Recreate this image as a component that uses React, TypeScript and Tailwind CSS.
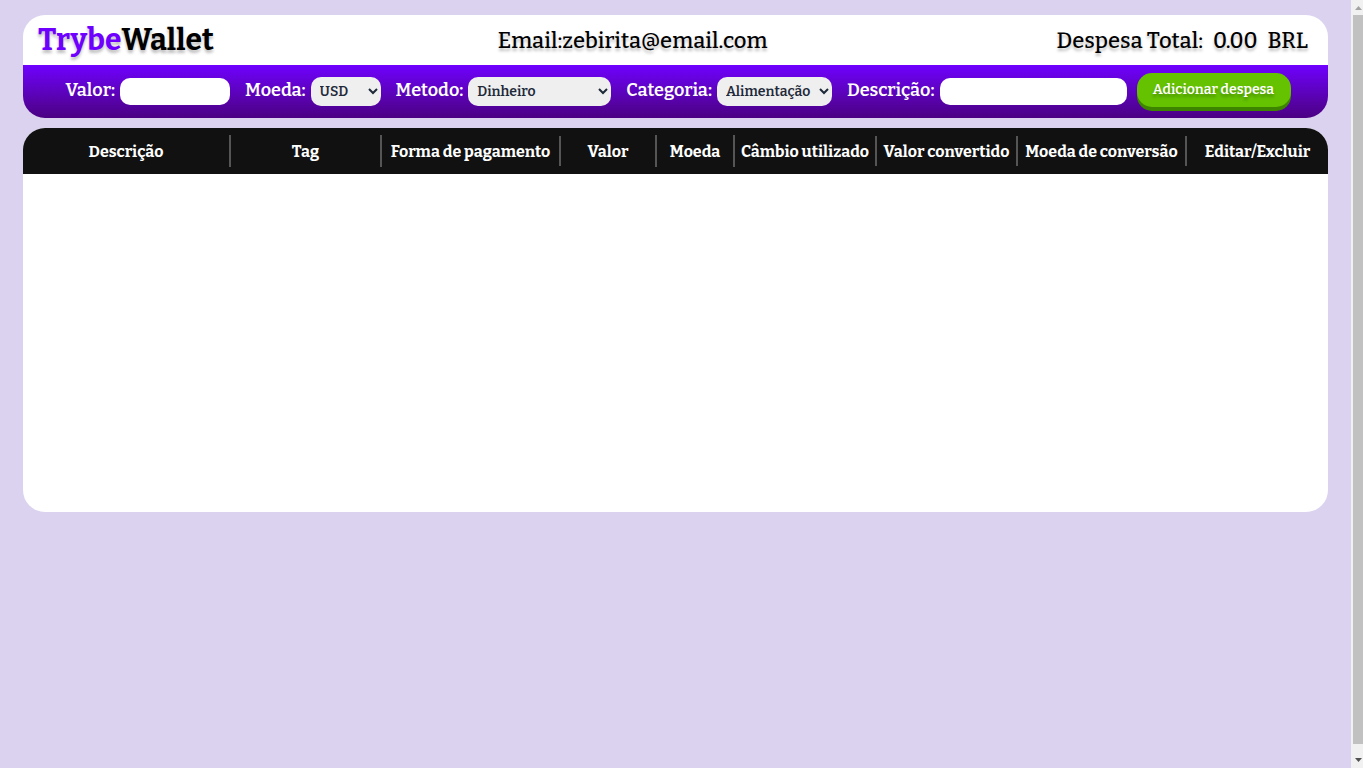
import { useState } from 'react';
import type { ReactNode } from 'react';

const columns = [
  { name: 'Descrição', width: 'w-[208px]', rule: 'h-8' },
  { name: 'Tag', width: 'w-[151px]', rule: 'h-8' },
  { name: 'Forma de pagamento', width: 'w-[179px]', rule: 'h-[30px]' },
  { name: 'Valor', width: 'w-[96px]', rule: 'h-8' },
  { name: 'Moeda', width: 'w-[78px]', rule: 'h-8' },
  { name: 'Câmbio utilizado', width: 'w-[142px]', rule: 'h-[30px]' },
  { name: 'Valor convertido', width: 'w-[141px]', rule: 'h-[30px]' },
  { name: 'Moeda de conversão', width: 'w-[169px]', rule: 'h-[30px]' },
  { name: 'Editar/Excluir', width: '', rule: 'h-[30px]' },
];

const currencies = ['USD', 'CAD', 'EUR', 'GBP', 'ARS', 'BTC', 'JPY'];
const methods = ['Dinheiro', 'Cartão de crédito', 'Cartão de débito'];
const tags = ['Alimentação', 'Lazer', 'Trabalho', 'Transporte', 'Saúde'];

type FieldProps = { id: string; label: string; children: ReactNode };

function Field({ id, label, children }: FieldProps) {
  return (
    <div className="flex items-center gap-[5px]">
      <label htmlFor={id} className="whitespace-nowrap pb-1 text-lg font-semibold leading-6 text-white">
        {label}
      </label>
      {children}
    </div>
  );
}

type SelectProps = { id: string; options: string[]; width: string };

function Select({ id, options, width }: SelectProps) {
  return (
    <select
      id={id}
      className={`${width} h-[29px] rounded-[10px] bg-[#efefef] px-[5px] text-sm font-semibold text-gray-800`}
    >
      {options.map((option) => (
        <option key={option}>{option}</option>
      ))}
    </select>
  );
}

function Header() {
  return (
    <header className="flex h-[50px] items-center justify-between rounded-t-[22px] bg-white px-[15px] text-black">
      <h1 className="text-3xl font-bold leading-9 [text-shadow:0_3px_3px_rgba(0,0,0,0.25)]">
        <span className="text-[#6f00ff]">Trybe</span>Wallet
      </h1>
      <p className="pt-0.5 text-[22px] font-medium leading-8 [text-shadow:0_3px_3px_rgba(0,0,0,0.25)]">
        Email:zebirita@email.com
      </p>
      <p className="flex gap-[10px] px-[5px] pt-0.5 text-[22px] font-medium leading-8 [text-shadow:0_3px_3px_rgba(0,0,0,0.25)]">
        <span>Despesa Total:</span>
        <span>0.00</span>
        <span>BRL</span>
      </p>
    </header>
  );
}

function ExpenseForm() {
  const [value, setValue] = useState('');
  const [description, setDescription] = useState('');
  return (
    <form
      onSubmit={(event) => event.preventDefault()}
      className="flex h-[53px] items-center justify-center gap-[15px] rounded-b-[22px] bg-linear-to-b from-[#6f00ff] to-[#4b0082] pl-[5px]"
    >
      <Field id="value" label="Valor:">
        <input
          id="value"
          value={value}
          onChange={(event) => setValue(event.target.value)}
          className="h-[27px] w-[110px] rounded-[10px] bg-white px-2 text-sm"
        />
      </Field>
      <Field id="currency" label="Moeda:">
        <Select id="currency" options={currencies} width="w-[70px]" />
      </Field>
      <Field id="method" label="Metodo:">
        <Select id="method" options={methods} width="w-[143px]" />
      </Field>
      <Field id="tag" label="Categoria:">
        <Select id="tag" options={tags} width="w-[115px]" />
      </Field>
      <div className="flex items-center gap-[10px]">
        <Field id="description" label="Descrição:">
          <input
            id="description"
            value={description}
            onChange={(event) => setDescription(event.target.value)}
            className="h-[27px] w-[187px] rounded-[10px] bg-white px-2 text-sm"
          />
        </Field>
        <button
          type="submit"
          className="mb-1 h-[34px] w-[154px] whitespace-nowrap rounded-[15px] bg-[#64c200] text-sm font-semibold text-white shadow-[0_4px_0_#3d8500] [text-shadow:0_3px_3px_rgba(0,0,0,0.25)]"
        >
          Adicionar despesa
        </button>
      </div>
    </form>
  );
}

function ExpenseTable() {
  return (
    <section className="mt-[10px] h-96 overflow-hidden rounded-[22px] bg-white">
      <table className="w-full table-fixed border-collapse">
        <thead>
          <tr className="h-[46px] bg-[#111111] text-base text-white">
            {columns.map((column, index) => (
              <th key={column.name} scope="col" className={`${column.width} p-0 font-bold`}>
                <div
                  className={`flex ${column.rule} items-center justify-center whitespace-nowrap pt-0.5 ${
                    index < columns.length - 1 ? 'border-r-2 border-[#555555]' : ''
                  }`}
                >
                  {column.name}
                </div>
              </th>
            ))}
          </tr>
        </thead>
        <tbody />
      </table>
    </section>
  );
}

function ScrollRail() {
  return (
    <aside aria-hidden="true" className="sticky top-0 flex h-screen w-3 shrink-0 flex-col items-end bg-[#f1f1f1]">
      <svg viewBox="0 0 10 15" className="h-[15px] w-[10px] shrink-0">
        <path d="M5.5 6 L9 10 H2 Z" fill="#a3a3a3" />
      </svg>
      <div className="w-[10px] flex-1 bg-[#c1c1c1]" />
      <svg viewBox="0 0 10 24" className="h-6 w-[10px] shrink-0">
        <path d="M2 14 H9 L5.5 18 Z" fill="#505050" />
      </svg>
    </aside>
  );
}

export default function App() {
  return (
    <div className="flex min-h-screen bg-[#dbd2f0] font-['Bitter','DejaVu_Serif_Condensed','DejaVu_Serif',serif]">
      <main className="min-w-0 flex-1 px-[23px] pt-[15px]">
        <Header />
        <ExpenseForm />
        <ExpenseTable />
      </main>
      <ScrollRail />
    </div>
  );
}
